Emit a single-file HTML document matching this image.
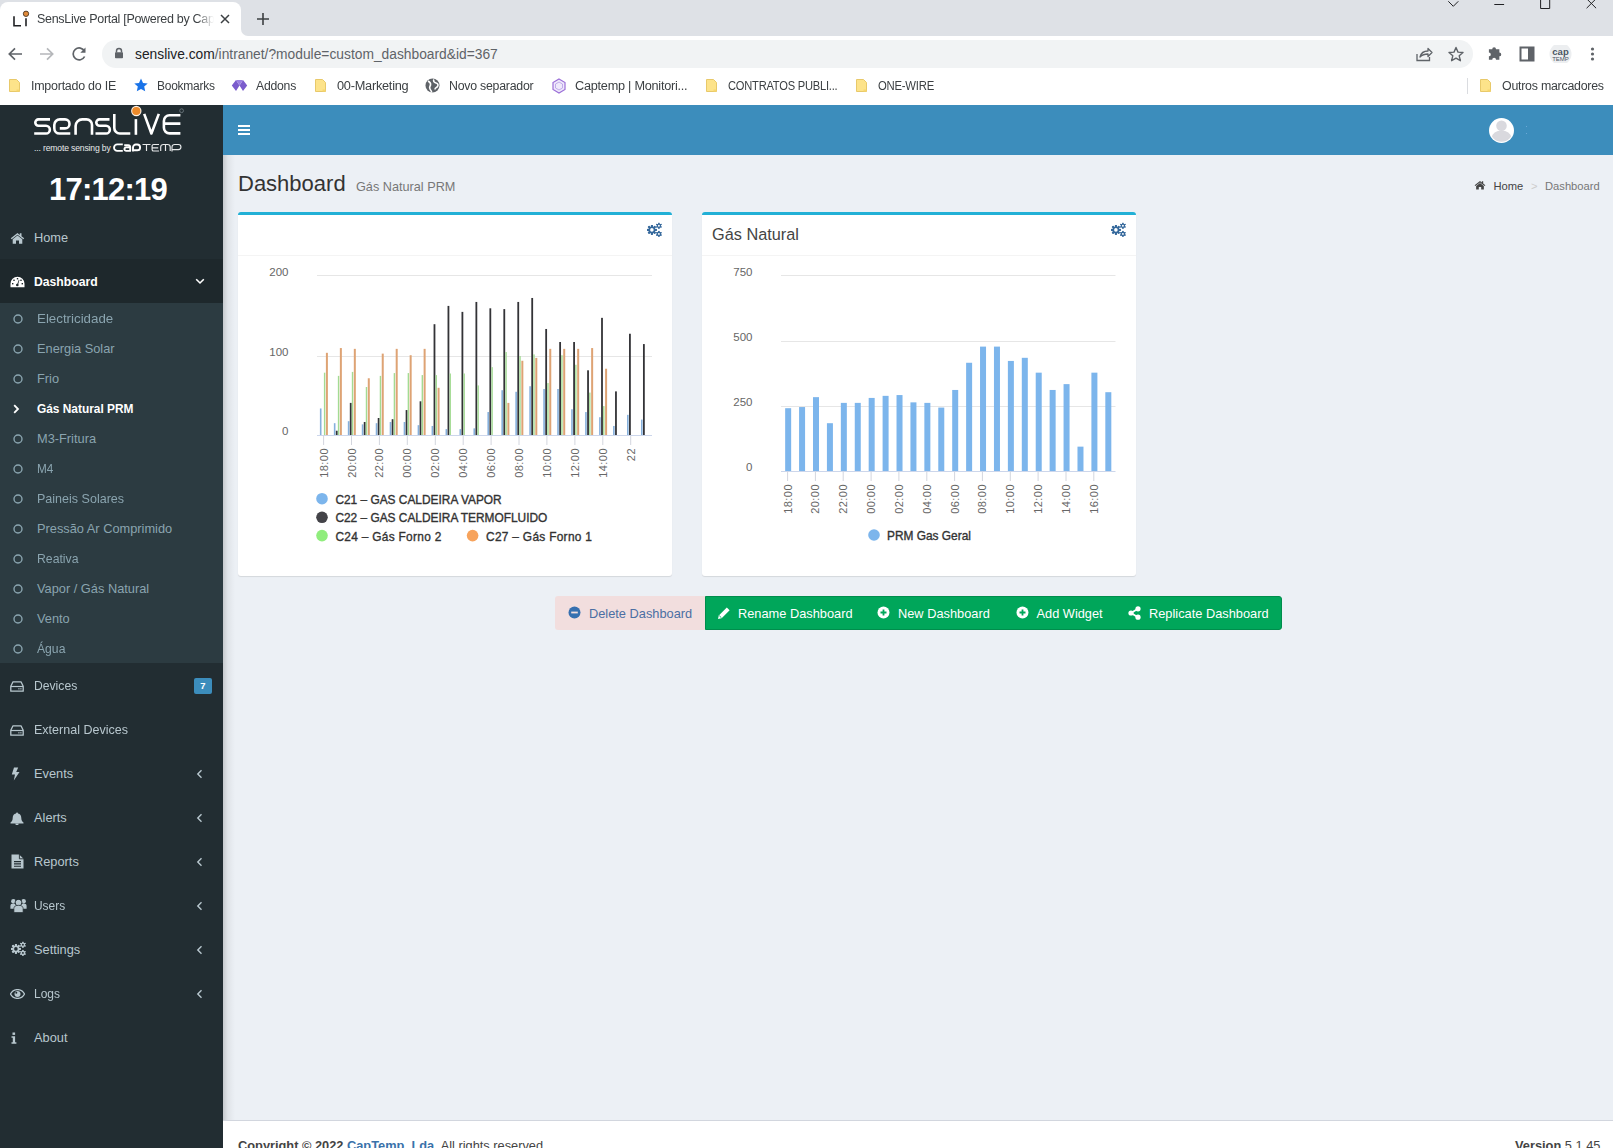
<!DOCTYPE html>
<html><head><meta charset="utf-8"><title>SensLive Portal</title><style>*{margin:0;padding:0;box-sizing:border-box}
html,body{width:1613px;height:1148px;overflow:hidden}
body{position:relative;font-family:"Liberation Sans",sans-serif;background:#ecf0f5}
.a{position:absolute}
.t{white-space:nowrap}
.bm{top:77.5px;font-size:12.5px;line-height:16px;color:#3c4043;letter-spacing:-0.25px}
.sm{font-size:12.8px;line-height:20px}
.bt{top:603.7px;font-size:12.8px;line-height:20px}
</style></head><body>
<div class="a" style="left:0;top:0;width:1613px;height:105px;background:#fff"></div>
<div class="a" style="left:0;top:0;width:241px;height:36px;background:#dee1e6"></div>
<div class="a" style="left:241px;top:0;width:1372px;height:36px;background:#dee1e6;border-bottom-left-radius:7px"></div>
<div class="a" style="left:0;top:2px;width:241px;height:36px;background:#fff;border-radius:8px 8px 0 0"></div>
<svg class="a" style="left:0;top:0" width="36" height="36" viewBox="0 0 36 36"><path d="M14 16.2v9.6h7" fill="none" stroke="#202124" stroke-width="1.6"/><path d="M26 18.3v8" stroke="#202124" stroke-width="1.6"/><circle cx="26" cy="13.8" r="2.7" fill="#e08a3a" stroke="#3a2a1a" stroke-width="0.8"/></svg>
<div class="a t" style="left:37px;top:11.5px;font-size:12.5px;letter-spacing:-0.3px;color:#3c4043;white-space:nowrap;width:180px;overflow:hidden;-webkit-mask-image:linear-gradient(90deg,#000 160px,transparent 177px)">SensLive Portal [Powered by CapTemp]</div>
<svg class="a" style="left:219px;top:13px" width="12" height="12" viewBox="0 0 12 12"><path d="M2 2l8 8M10 2l-8 8" stroke="#3c4043" stroke-width="1.5"/></svg>
<svg class="a" style="left:256px;top:12px" width="14" height="14" viewBox="0 0 14 14"><path d="M7 1v12M1 7h12" stroke="#3c4043" stroke-width="1.6"/></svg>
<svg class="a" style="left:1446px;top:0" width="160" height="12" viewBox="0 0 160 12"><path d="M2.3 1.3l5 5 5-5" fill="none" stroke="#202124" stroke-width="1"/><path d="M48.3 4.5h9.8" stroke="#202124" stroke-width="1"/><path d="M94.6 -1h9.1v9.5h-9.1z" fill="none" stroke="#202124" stroke-width="1"/><path d="M140.6 -1.3l9.5 9.5M150.1 -1.3l-9.5 9.5" stroke="#202124" stroke-width="1"/></svg>
<svg class="a" style="left:6px;top:45px" width="90" height="18" viewBox="0 0 90 18"><path d="M16 9H3.5M9 3.3L3.3 9 9 14.7" fill="none" stroke="#5f6368" stroke-width="1.7"/><path d="M34 9h12.5M41 3.3L46.7 9 41 14.7" fill="none" stroke="#b5b7ba" stroke-width="1.7"/><path d="M78.5 6.2A6 6 0 1 0 78.6 11.5" fill="none" stroke="#5f6368" stroke-width="1.7"/><path d="M79.5 2.6v5.2h-5.2z" fill="#5f6368"/></svg>
<div class="a" style="left:102px;top:40px;width:1371px;height:28px;background:#f1f3f4;border-radius:14px"></div>
<svg class="a" style="left:114px;top:47px" width="10" height="12" viewBox="0 0 10 12"><path d="M2.5 5.5V4a2.5 2.5 0 0 1 5 0v1.5" fill="none" stroke="#5f6368" stroke-width="1.5"/><rect x="1" y="5.3" width="8" height="6" rx="0.8" fill="#5f6368"/></svg>
<div class="a t" style="left:135px;top:47px;font-size:13.8px;color:#202124;white-space:nowrap">senslive.com<span style="color:#5f6368">/intranet/?module=custom_dashboard&amp;id=367</span></div>
<svg class="a" style="left:1415px;top:46px" width="50" height="16" viewBox="0 0 50 16"><path d="M2 8v6.5h12.5V11" fill="none" stroke="#5f6368" stroke-width="1.3"/><path d="M5 11c1-4 4-6 8-6V2.5l4 4-4 4V8c-3 0-6 1-8 3z" fill="none" stroke="#5f6368" stroke-width="1.3" stroke-linejoin="round"/><path d="M41 1.5l2 4.6 5 .4-3.8 3.3 1.2 4.9L41 12.1l-4.4 2.6 1.2-4.9L34 6.5l5-.4z" fill="none" stroke="#5f6368" stroke-width="1.4" stroke-linejoin="round"/></svg>
<svg class="a" style="left:1487px;top:45px" width="112" height="18" viewBox="0 0 112 18"><path d="M2 6h3.5a2 2 0 1 1 4 0H13v3.5a2 2 0 1 1 0 4V17H9.5a2 2 0 1 0-4 0H2v-3.5a2 2 0 1 0 0-4z" fill="#5f6368" transform="translate(0,-1.5) scale(0.95)"/><path d="M33.5 2.5h13v13h-13z" fill="none" stroke="#5f6368" stroke-width="2"/><path d="M41 2.5h5.5v13H41z" fill="#5f6368"/><circle cx="73.5" cy="9" r="11" fill="#eceef0"/><text x="73.5" y="9.5" font-family="Liberation Sans" font-size="9.5" font-weight="bold" fill="#4a5563" text-anchor="middle">cap</text><text x="73.5" y="15.5" font-family="Liberation Sans" font-size="6" fill="#4a5563" text-anchor="middle">TEMP</text><circle cx="105.5" cy="4" r="1.6" fill="#5f6368"/><circle cx="105.5" cy="9" r="1.6" fill="#5f6368"/><circle cx="105.5" cy="14" r="1.6" fill="#5f6368"/></svg>
<svg class="a" style="left:8px;top:78px" width="13" height="15" viewBox="0 0 13 15"><path d="M1.5 1.5h7l3 3v9h-10z" fill="#fde38a" stroke="#e8c96a" stroke-width="1"/><path d="M8.5 11.5h3v2h-3z" fill="#f7d66f"/></svg>
<div class="a t bm" style="left:31px;transform:scaleX(0.9977);transform-origin:0 0">Importado do IE</div>
<svg class="a" style="left:134px;top:78px" width="14" height="14" viewBox="0 0 14 14"><path d="M7 .5l2 4.4 4.7.5-3.5 3.2 1 4.7L7 10.9l-4.2 2.4 1-4.7L.3 5.4 5 4.9z" fill="#1a73e8"/></svg>
<div class="a t bm" style="left:157px;transform:scaleX(0.9589);transform-origin:0 0">Bookmarks</div>
<svg class="a" style="left:231px;top:79px" width="17" height="13" viewBox="0 0 17 13"><path d="M5 1l3.5 5.5L5 12 .8 6.5zM12 1l4.2 5.5L12 12 8.5 6.5z" fill="#7b5ccc"/><path d="M5 1h7l-3.5 5.5z" fill="#9a7fe0"/></svg>
<div class="a t bm" style="left:256px;transform:scaleX(0.9780);transform-origin:0 0">Addons</div>
<svg class="a" style="left:314px;top:78px" width="13" height="15" viewBox="0 0 13 15"><path d="M1.5 1.5h7l3 3v9h-10z" fill="#fde38a" stroke="#e8c96a" stroke-width="1"/><path d="M8.5 11.5h3v2h-3z" fill="#f7d66f"/></svg>
<div class="a t bm" style="left:337px;transform:scaleX(1.0207);transform-origin:0 0">00-Marketing</div>
<svg class="a" style="left:425px;top:78px" width="15" height="15" viewBox="0 0 15 15"><circle cx="7.5" cy="7.5" r="7" fill="#5f6368"/><path d="M3 3c2 1 3 2 2.5 4S4 9 5 11s2 2.5 1.5 3.5M9 1.5c-1 1.5 0 3 2 3.5s2.5 2 1.5 3.5-2.5 1-2.5 3" fill="none" stroke="#fff" stroke-width="1.6"/></svg>
<div class="a t bm" style="left:449px;transform:scaleX(0.9877);transform-origin:0 0">Novo separador</div>
<svg class="a" style="left:551px;top:78px" width="16" height="16" viewBox="0 0 16 16"><path d="M8 1l6 3.5v7L8 15l-6-3.5v-7z" fill="#efe9fb" stroke="#9b6fd8" stroke-width="1.2"/><path d="M8 4l3.5 2v4L8 12l-3.5-2V6z" fill="none" stroke="#b49be6" stroke-width="0.8"/></svg>
<div class="a t bm" style="left:575px;transform:scaleX(1.0167);transform-origin:0 0">Captemp | Monitori...</div>
<svg class="a" style="left:705px;top:78px" width="13" height="15" viewBox="0 0 13 15"><path d="M1.5 1.5h7l3 3v9h-10z" fill="#fde38a" stroke="#e8c96a" stroke-width="1"/><path d="M8.5 11.5h3v2h-3z" fill="#f7d66f"/></svg>
<div class="a t bm" style="left:728px;transform:scaleX(0.8906);transform-origin:0 0">CONTRATOS PUBLI...</div>
<svg class="a" style="left:855px;top:78px" width="13" height="15" viewBox="0 0 13 15"><path d="M1.5 1.5h7l3 3v9h-10z" fill="#fde38a" stroke="#e8c96a" stroke-width="1"/><path d="M8.5 11.5h3v2h-3z" fill="#f7d66f"/></svg>
<div class="a t bm" style="left:878px;transform:scaleX(0.9048);transform-origin:0 0">ONE-WIRE</div>
<div class="a" style="left:1467px;top:78px;width:1px;height:16px;background:#dadce0"></div>
<svg class="a" style="left:1479px;top:78px" width="13" height="15" viewBox="0 0 13 15"><path d="M1.5 1.5h7l3 3v9h-10z" fill="#fde38a" stroke="#e8c96a" stroke-width="1"/><path d="M8.5 11.5h3v2h-3z" fill="#f7d66f"/></svg>
<div class="a t bm" style="left:1502px;transform:scaleX(0.9909);transform-origin:0 0">Outros marcadores</div>
<div class="a" style="left:223px;top:105px;width:1390px;height:50px;background:#3c8dbc"></div>
<svg class="a" style="left:238px;top:124px" width="12" height="12" viewBox="0 0 12 12"><path d="M0 2h12M0 6h12M0 10h12" stroke="#fff" stroke-width="2"/></svg>
<svg class="a" style="left:1489px;top:117.5px" width="25" height="25" viewBox="0 0 25 25"><defs><clipPath id="avc"><circle cx="12.5" cy="12.5" r="11.3"/></clipPath></defs><circle cx="12.5" cy="12.5" r="12.5" fill="#fff"/><g clip-path="url(#avc)" fill="#d9d9de"><circle cx="12.5" cy="7.8" r="5.3"/><ellipse cx="12.5" cy="19.5" rx="9.6" ry="7"/></g></svg>
<div class="a" style="left:1525.5px;top:126px;width:1.2px;height:1.2px;background:#6aa8d6"></div><div class="a" style="left:1525.5px;top:133px;width:1.2px;height:1.2px;background:#6aa8d6"></div>
<div class="a" style="left:223px;top:155px;width:12px;height:993px;background:linear-gradient(90deg,rgba(0,0,0,0.16),rgba(0,0,0,0.05) 40%,rgba(0,0,0,0))"></div>
<div class="a t" style="left:238px;top:171px;font-size:22px;line-height:26px;color:#333">Dashboard</div>
<div class="a t" style="left:356px;top:178.5px;font-size:12.7px;line-height:16px;color:#777">Gás Natural PRM</div>
<svg class="a" style="left:1474px;top:180px" width="12" height="10" viewBox="0 0 15 12"><path d="M7.5 1L.8 6.3l.9 1L7.5 2.8l5.8 4.5.9-1L11.5 4.2V1.3H9.8v1.6z" fill="#444"/><path d="M2.7 7.2L7.5 3.5l4.8 3.7V11.7H9V8.5H6v3.2H2.7z" fill="#444"/></svg>
<div class="a t" style="left:1493.5px;top:178px;font-size:11.2px;line-height:16px;color:#444">Home</div>
<div class="a t" style="left:1531px;top:178px;font-size:11.2px;line-height:16px;color:#ccc">&gt;</div>
<div class="a t" style="left:1545px;top:178px;font-size:11.2px;line-height:16px;color:#777">Dashboard</div>
<div class="a" style="left:238px;top:212px;width:434px;height:364px;background:#fff;border-top:3px solid #22b0d6;border-radius:3px;box-shadow:0 1px 1px rgba(0,0,0,0.1)"></div>
<div class="a" style="left:238px;top:255px;width:434px;height:1px;background:#f4f4f4"></div>
<div class="a" style="left:645px;top:221px;line-height:0"><svg width="18.0" height="18.0" viewBox="0 0 18 18"><circle cx="6.9" cy="8.9" r="3.5" fill="#36699c"/><rect x="5.95" y="4.00" width="1.9" height="9.80" fill="#36699c" transform="rotate(0.0 6.9 8.9)"/><rect x="5.95" y="4.00" width="1.9" height="9.80" fill="#36699c" transform="rotate(45.0 6.9 8.9)"/><rect x="5.95" y="4.00" width="1.9" height="9.80" fill="#36699c" transform="rotate(90.0 6.9 8.9)"/><rect x="5.95" y="4.00" width="1.9" height="9.80" fill="#36699c" transform="rotate(135.0 6.9 8.9)"/><rect x="5.95" y="4.00" width="1.9" height="9.80" fill="#36699c" transform="rotate(180.0 6.9 8.9)"/><rect x="5.95" y="4.00" width="1.9" height="9.80" fill="#36699c" transform="rotate(225.0 6.9 8.9)"/><rect x="5.95" y="4.00" width="1.9" height="9.80" fill="#36699c" transform="rotate(270.0 6.9 8.9)"/><rect x="5.95" y="4.00" width="1.9" height="9.80" fill="#36699c" transform="rotate(315.0 6.9 8.9)"/><circle cx="6.9" cy="8.9" r="1.8" fill="#fff"/><circle cx="13.9" cy="4.8" r="2.1" fill="#36699c"/><rect x="13.30" y="1.85" width="1.2" height="5.90" fill="#36699c" transform="rotate(0.0 13.9 4.8)"/><rect x="13.30" y="1.85" width="1.2" height="5.90" fill="#36699c" transform="rotate(60.0 13.9 4.8)"/><rect x="13.30" y="1.85" width="1.2" height="5.90" fill="#36699c" transform="rotate(120.0 13.9 4.8)"/><rect x="13.30" y="1.85" width="1.2" height="5.90" fill="#36699c" transform="rotate(180.0 13.9 4.8)"/><rect x="13.30" y="1.85" width="1.2" height="5.90" fill="#36699c" transform="rotate(240.0 13.9 4.8)"/><rect x="13.30" y="1.85" width="1.2" height="5.90" fill="#36699c" transform="rotate(300.0 13.9 4.8)"/><circle cx="13.9" cy="4.8" r="0.95" fill="#fff"/><circle cx="13.9" cy="12.9" r="2.1" fill="#36699c"/><rect x="13.30" y="9.95" width="1.2" height="5.90" fill="#36699c" transform="rotate(0.0 13.9 12.9)"/><rect x="13.30" y="9.95" width="1.2" height="5.90" fill="#36699c" transform="rotate(60.0 13.9 12.9)"/><rect x="13.30" y="9.95" width="1.2" height="5.90" fill="#36699c" transform="rotate(120.0 13.9 12.9)"/><rect x="13.30" y="9.95" width="1.2" height="5.90" fill="#36699c" transform="rotate(180.0 13.9 12.9)"/><rect x="13.30" y="9.95" width="1.2" height="5.90" fill="#36699c" transform="rotate(240.0 13.9 12.9)"/><rect x="13.30" y="9.95" width="1.2" height="5.90" fill="#36699c" transform="rotate(300.0 13.9 12.9)"/><circle cx="13.9" cy="12.9" r="0.95" fill="#fff"/></svg></div>
<div class="a" style="left:702px;top:212px;width:434px;height:364px;background:#fff;border-top:3px solid #22b0d6;border-radius:3px;box-shadow:0 1px 1px rgba(0,0,0,0.1)"></div>
<div class="a" style="left:702px;top:255px;width:434px;height:1px;background:#f4f4f4"></div>
<div class="a" style="left:1109px;top:221px;line-height:0"><svg width="18.0" height="18.0" viewBox="0 0 18 18"><circle cx="6.9" cy="8.9" r="3.5" fill="#36699c"/><rect x="5.95" y="4.00" width="1.9" height="9.80" fill="#36699c" transform="rotate(0.0 6.9 8.9)"/><rect x="5.95" y="4.00" width="1.9" height="9.80" fill="#36699c" transform="rotate(45.0 6.9 8.9)"/><rect x="5.95" y="4.00" width="1.9" height="9.80" fill="#36699c" transform="rotate(90.0 6.9 8.9)"/><rect x="5.95" y="4.00" width="1.9" height="9.80" fill="#36699c" transform="rotate(135.0 6.9 8.9)"/><rect x="5.95" y="4.00" width="1.9" height="9.80" fill="#36699c" transform="rotate(180.0 6.9 8.9)"/><rect x="5.95" y="4.00" width="1.9" height="9.80" fill="#36699c" transform="rotate(225.0 6.9 8.9)"/><rect x="5.95" y="4.00" width="1.9" height="9.80" fill="#36699c" transform="rotate(270.0 6.9 8.9)"/><rect x="5.95" y="4.00" width="1.9" height="9.80" fill="#36699c" transform="rotate(315.0 6.9 8.9)"/><circle cx="6.9" cy="8.9" r="1.8" fill="#fff"/><circle cx="13.9" cy="4.8" r="2.1" fill="#36699c"/><rect x="13.30" y="1.85" width="1.2" height="5.90" fill="#36699c" transform="rotate(0.0 13.9 4.8)"/><rect x="13.30" y="1.85" width="1.2" height="5.90" fill="#36699c" transform="rotate(60.0 13.9 4.8)"/><rect x="13.30" y="1.85" width="1.2" height="5.90" fill="#36699c" transform="rotate(120.0 13.9 4.8)"/><rect x="13.30" y="1.85" width="1.2" height="5.90" fill="#36699c" transform="rotate(180.0 13.9 4.8)"/><rect x="13.30" y="1.85" width="1.2" height="5.90" fill="#36699c" transform="rotate(240.0 13.9 4.8)"/><rect x="13.30" y="1.85" width="1.2" height="5.90" fill="#36699c" transform="rotate(300.0 13.9 4.8)"/><circle cx="13.9" cy="4.8" r="0.95" fill="#fff"/><circle cx="13.9" cy="12.9" r="2.1" fill="#36699c"/><rect x="13.30" y="9.95" width="1.2" height="5.90" fill="#36699c" transform="rotate(0.0 13.9 12.9)"/><rect x="13.30" y="9.95" width="1.2" height="5.90" fill="#36699c" transform="rotate(60.0 13.9 12.9)"/><rect x="13.30" y="9.95" width="1.2" height="5.90" fill="#36699c" transform="rotate(120.0 13.9 12.9)"/><rect x="13.30" y="9.95" width="1.2" height="5.90" fill="#36699c" transform="rotate(180.0 13.9 12.9)"/><rect x="13.30" y="9.95" width="1.2" height="5.90" fill="#36699c" transform="rotate(240.0 13.9 12.9)"/><rect x="13.30" y="9.95" width="1.2" height="5.90" fill="#36699c" transform="rotate(300.0 13.9 12.9)"/><circle cx="13.9" cy="12.9" r="0.95" fill="#fff"/></svg></div>
<div class="a t" style="left:712px;top:224px;font-size:16.3px;line-height:20px;color:#444">Gás Natural</div>
<svg class="a" style="left:238px;top:256px" width="434" height="320" viewBox="238 256 434 320" font-family="Liberation Sans">
<path d="M317 275.5H652" stroke="#e6e6e6" stroke-width="1"/>
<path d="M317 356.5H652" stroke="#e6e6e6" stroke-width="1"/>
<text x="288.5" y="276" font-size="11.5" fill="#666" text-anchor="end">200</text>
<text x="288.5" y="356" font-size="11.5" fill="#666" text-anchor="end">100</text>
<text x="288.5" y="435" font-size="11.5" fill="#666" text-anchor="end">0</text>
<rect x="319.90" y="408.47" width="1.6" height="27.03" fill="#86b0dc"/>
<rect x="323.90" y="372.69" width="1.4" height="62.80" fill="#a3db93"/>
<rect x="325.90" y="352.82" width="2.0" height="82.68" fill="#dea374"/>
<rect x="333.86" y="423.18" width="1.6" height="12.32" fill="#86b0dc"/>
<rect x="335.86" y="430.73" width="1.8" height="4.77" fill="#333337"/>
<rect x="337.86" y="375.88" width="1.4" height="59.62" fill="#a3db93"/>
<rect x="339.86" y="348.05" width="2.0" height="87.45" fill="#dea374"/>
<rect x="347.82" y="421.19" width="1.6" height="14.31" fill="#86b0dc"/>
<rect x="349.82" y="402.90" width="1.8" height="32.59" fill="#333337"/>
<rect x="351.82" y="371.90" width="1.4" height="63.60" fill="#a3db93"/>
<rect x="353.82" y="348.85" width="2.0" height="86.66" fill="#dea374"/>
<rect x="361.78" y="424.37" width="1.6" height="11.13" fill="#86b0dc"/>
<rect x="363.78" y="421.99" width="1.8" height="13.52" fill="#333337"/>
<rect x="365.78" y="387.00" width="1.4" height="48.50" fill="#a3db93"/>
<rect x="367.78" y="378.26" width="2.0" height="57.24" fill="#dea374"/>
<rect x="375.74" y="423.18" width="1.6" height="12.32" fill="#86b0dc"/>
<rect x="377.74" y="418.01" width="1.8" height="17.49" fill="#333337"/>
<rect x="379.74" y="375.88" width="1.4" height="59.62" fill="#a3db93"/>
<rect x="381.74" y="353.62" width="2.0" height="81.89" fill="#dea374"/>
<rect x="389.70" y="421.99" width="1.6" height="13.52" fill="#86b0dc"/>
<rect x="391.70" y="419.20" width="1.8" height="16.30" fill="#333337"/>
<rect x="393.70" y="373.09" width="1.4" height="62.41" fill="#a3db93"/>
<rect x="395.70" y="348.85" width="2.0" height="86.66" fill="#dea374"/>
<rect x="403.66" y="421.99" width="1.6" height="13.52" fill="#86b0dc"/>
<rect x="405.66" y="410.06" width="1.8" height="25.44" fill="#333337"/>
<rect x="407.66" y="373.09" width="1.4" height="62.41" fill="#a3db93"/>
<rect x="409.66" y="355.20" width="2.0" height="80.30" fill="#dea374"/>
<rect x="417.62" y="425.17" width="1.6" height="10.34" fill="#86b0dc"/>
<rect x="419.62" y="401.31" width="1.8" height="34.19" fill="#333337"/>
<rect x="421.62" y="375.08" width="1.4" height="60.42" fill="#a3db93"/>
<rect x="423.62" y="348.85" width="2.0" height="86.66" fill="#dea374"/>
<rect x="431.58" y="425.96" width="1.6" height="9.54" fill="#86b0dc"/>
<rect x="433.58" y="324.20" width="1.8" height="111.30" fill="#333337"/>
<rect x="435.58" y="375.08" width="1.4" height="60.42" fill="#a3db93"/>
<rect x="437.58" y="387.80" width="2.0" height="47.70" fill="#dea374"/>
<rect x="445.54" y="429.14" width="1.6" height="6.36" fill="#86b0dc"/>
<rect x="447.54" y="305.91" width="1.8" height="129.59" fill="#333337"/>
<rect x="449.54" y="373.49" width="1.4" height="62.01" fill="#a3db93"/>
<rect x="459.50" y="429.14" width="1.6" height="6.36" fill="#86b0dc"/>
<rect x="461.50" y="311.88" width="1.8" height="123.62" fill="#333337"/>
<rect x="463.50" y="373.49" width="1.4" height="62.01" fill="#a3db93"/>
<rect x="473.46" y="428.35" width="1.6" height="7.16" fill="#86b0dc"/>
<rect x="475.46" y="301.94" width="1.8" height="133.56" fill="#333337"/>
<rect x="477.46" y="385.42" width="1.4" height="50.09" fill="#a3db93"/>
<rect x="487.42" y="412.05" width="1.6" height="23.45" fill="#86b0dc"/>
<rect x="489.42" y="308.30" width="1.8" height="127.20" fill="#333337"/>
<rect x="491.42" y="367.13" width="1.4" height="68.37" fill="#a3db93"/>
<rect x="501.38" y="390.19" width="1.6" height="45.32" fill="#86b0dc"/>
<rect x="503.38" y="309.10" width="1.8" height="126.41" fill="#333337"/>
<rect x="505.38" y="352.02" width="1.4" height="83.48" fill="#a3db93"/>
<rect x="507.38" y="402.90" width="2.0" height="32.59" fill="#dea374"/>
<rect x="515.34" y="391.77" width="1.6" height="43.73" fill="#86b0dc"/>
<rect x="517.34" y="301.94" width="1.8" height="133.56" fill="#333337"/>
<rect x="519.34" y="356.00" width="1.4" height="79.50" fill="#a3db93"/>
<rect x="521.34" y="360.77" width="2.0" height="74.73" fill="#dea374"/>
<rect x="529.30" y="386.21" width="1.6" height="49.29" fill="#86b0dc"/>
<rect x="531.30" y="297.97" width="1.8" height="137.53" fill="#333337"/>
<rect x="533.30" y="354.41" width="1.4" height="81.09" fill="#a3db93"/>
<rect x="535.30" y="357.91" width="2.0" height="77.59" fill="#dea374"/>
<rect x="543.26" y="388.99" width="1.6" height="46.51" fill="#86b0dc"/>
<rect x="545.26" y="328.97" width="1.8" height="106.53" fill="#333337"/>
<rect x="547.26" y="383.03" width="1.4" height="52.47" fill="#a3db93"/>
<rect x="549.26" y="348.85" width="2.0" height="86.66" fill="#dea374"/>
<rect x="557.22" y="388.99" width="1.6" height="46.51" fill="#86b0dc"/>
<rect x="559.22" y="342.01" width="1.8" height="93.49" fill="#333337"/>
<rect x="561.22" y="355.20" width="1.4" height="80.30" fill="#a3db93"/>
<rect x="563.22" y="348.85" width="2.0" height="86.66" fill="#dea374"/>
<rect x="571.18" y="409.26" width="1.6" height="26.24" fill="#86b0dc"/>
<rect x="573.18" y="342.01" width="1.8" height="93.49" fill="#333337"/>
<rect x="575.18" y="364.75" width="1.4" height="70.76" fill="#a3db93"/>
<rect x="577.18" y="348.85" width="2.0" height="86.66" fill="#dea374"/>
<rect x="585.14" y="412.05" width="1.6" height="23.45" fill="#86b0dc"/>
<rect x="587.14" y="370.31" width="1.8" height="65.19" fill="#333337"/>
<rect x="589.14" y="392.57" width="1.4" height="42.93" fill="#a3db93"/>
<rect x="591.14" y="348.05" width="2.0" height="87.45" fill="#dea374"/>
<rect x="599.10" y="417.21" width="1.6" height="18.29" fill="#86b0dc"/>
<rect x="601.10" y="317.84" width="1.8" height="117.66" fill="#333337"/>
<rect x="603.10" y="406.08" width="1.4" height="29.42" fill="#a3db93"/>
<rect x="605.10" y="368.72" width="2.0" height="66.78" fill="#dea374"/>
<rect x="613.06" y="425.96" width="1.6" height="9.54" fill="#86b0dc"/>
<rect x="615.06" y="391.38" width="1.8" height="44.12" fill="#333337"/>
<rect x="627.02" y="414.83" width="1.6" height="20.67" fill="#86b0dc"/>
<rect x="629.02" y="333.74" width="1.8" height="101.76" fill="#333337"/>
<rect x="640.98" y="419.60" width="1.6" height="15.90" fill="#86b0dc"/>
<rect x="642.98" y="344.07" width="1.8" height="91.43" fill="#333337"/>
<path d="M317 435.5H652" stroke="#ccd6eb" stroke-width="1"/>
<path d="M323.6 435.5V445" stroke="#d3d6de" stroke-width="1"/>
<text transform="translate(327.6 448) rotate(-90)" font-size="11" letter-spacing="0.45" fill="#666" text-anchor="end">18:00</text>
<path d="M351.5 435.5V445" stroke="#d3d6de" stroke-width="1"/>
<text transform="translate(355.5 448) rotate(-90)" font-size="11" letter-spacing="0.45" fill="#666" text-anchor="end">20:00</text>
<path d="M379.4 435.5V445" stroke="#d3d6de" stroke-width="1"/>
<text transform="translate(383.4 448) rotate(-90)" font-size="11" letter-spacing="0.45" fill="#666" text-anchor="end">22:00</text>
<path d="M407.3 435.5V445" stroke="#d3d6de" stroke-width="1"/>
<text transform="translate(411.3 448) rotate(-90)" font-size="11" letter-spacing="0.45" fill="#666" text-anchor="end">00:00</text>
<path d="M435.3 435.5V445" stroke="#d3d6de" stroke-width="1"/>
<text transform="translate(439.3 448) rotate(-90)" font-size="11" letter-spacing="0.45" fill="#666" text-anchor="end">02:00</text>
<path d="M463.2 435.5V445" stroke="#d3d6de" stroke-width="1"/>
<text transform="translate(467.2 448) rotate(-90)" font-size="11" letter-spacing="0.45" fill="#666" text-anchor="end">04:00</text>
<path d="M491.1 435.5V445" stroke="#d3d6de" stroke-width="1"/>
<text transform="translate(495.1 448) rotate(-90)" font-size="11" letter-spacing="0.45" fill="#666" text-anchor="end">06:00</text>
<path d="M519.0 435.5V445" stroke="#d3d6de" stroke-width="1"/>
<text transform="translate(523.0 448) rotate(-90)" font-size="11" letter-spacing="0.45" fill="#666" text-anchor="end">08:00</text>
<path d="M546.9 435.5V445" stroke="#d3d6de" stroke-width="1"/>
<text transform="translate(550.9 448) rotate(-90)" font-size="11" letter-spacing="0.45" fill="#666" text-anchor="end">10:00</text>
<path d="M574.9 435.5V445" stroke="#d3d6de" stroke-width="1"/>
<text transform="translate(578.9 448) rotate(-90)" font-size="11" letter-spacing="0.45" fill="#666" text-anchor="end">12:00</text>
<path d="M602.8 435.5V445" stroke="#d3d6de" stroke-width="1"/>
<text transform="translate(606.8 448) rotate(-90)" font-size="11" letter-spacing="0.45" fill="#666" text-anchor="end">14:00</text>
<path d="M630.7 435.5V445" stroke="#d3d6de" stroke-width="1"/>
<text transform="translate(634.7 448) rotate(-90)" font-size="11" letter-spacing="0.45" fill="#666" text-anchor="end">22</text>
<circle cx="322" cy="498.7" r="5.8" fill="#7cb5ec"/>
<text x="335.4" y="503.7" font-size="11.9" letter-spacing="0" fill="#333" stroke="#333" stroke-width="0.35">C21 – GAS CALDEIRA VAPOR</text>
<circle cx="322" cy="517.3" r="5.8" fill="#434348"/>
<text x="335.4" y="522.3" font-size="11.9" letter-spacing="0" fill="#333" stroke="#333" stroke-width="0.35">C22 – GAS CALDEIRA TERMOFLUIDO</text>
<circle cx="322" cy="535.6" r="5.8" fill="#90ed7d"/>
<text x="335.4" y="540.6" font-size="11.9" letter-spacing="0.3" fill="#333" stroke="#333" stroke-width="0.35">C24 – Gás Forno 2</text>
<circle cx="472.6" cy="535.6" r="5.8" fill="#f7a35c"/>
<text x="486.0" y="540.6" font-size="11.9" letter-spacing="0.3" fill="#333" stroke="#333" stroke-width="0.35">C27 – Gás Forno 1</text>
</svg>
<svg class="a" style="left:702px;top:256px" width="434" height="320" viewBox="702 256 434 320" font-family="Liberation Sans">
<path d="M781 275.5H1115.5" stroke="#e6e6e6" stroke-width="1"/>
<path d="M781 341.5H1115.5" stroke="#e6e6e6" stroke-width="1"/>
<path d="M781 406.5H1115.5" stroke="#e6e6e6" stroke-width="1"/>
<text x="752.5" y="276" font-size="11.5" fill="#666" text-anchor="end">750</text>
<text x="752.5" y="341" font-size="11.5" fill="#666" text-anchor="end">500</text>
<text x="752.5" y="406" font-size="11.5" fill="#666" text-anchor="end">250</text>
<text x="752.5" y="471" font-size="11.5" fill="#666" text-anchor="end">0</text>
<rect x="785.16" y="408.19" width="6" height="62.81" fill="#7cb5ec"/>
<rect x="799.08" y="407.05" width="6" height="63.95" fill="#7cb5ec"/>
<rect x="813.00" y="397.15" width="6" height="73.85" fill="#7cb5ec"/>
<rect x="826.92" y="423.20" width="6" height="47.80" fill="#7cb5ec"/>
<rect x="840.84" y="402.88" width="6" height="68.12" fill="#7cb5ec"/>
<rect x="854.76" y="402.88" width="6" height="68.12" fill="#7cb5ec"/>
<rect x="868.68" y="397.93" width="6" height="73.07" fill="#7cb5ec"/>
<rect x="882.60" y="395.85" width="6" height="75.15" fill="#7cb5ec"/>
<rect x="896.52" y="395.06" width="6" height="75.94" fill="#7cb5ec"/>
<rect x="910.44" y="402.36" width="6" height="68.64" fill="#7cb5ec"/>
<rect x="924.36" y="402.88" width="6" height="68.12" fill="#7cb5ec"/>
<rect x="938.28" y="407.57" width="6" height="63.43" fill="#7cb5ec"/>
<rect x="952.20" y="389.96" width="6" height="81.04" fill="#7cb5ec"/>
<rect x="966.12" y="362.76" width="6" height="108.24" fill="#7cb5ec"/>
<rect x="980.04" y="346.61" width="6" height="124.39" fill="#7cb5ec"/>
<rect x="993.96" y="346.61" width="6" height="124.39" fill="#7cb5ec"/>
<rect x="1007.88" y="360.94" width="6" height="110.06" fill="#7cb5ec"/>
<rect x="1021.80" y="357.81" width="6" height="113.19" fill="#7cb5ec"/>
<rect x="1035.72" y="372.66" width="6" height="98.34" fill="#7cb5ec"/>
<rect x="1049.64" y="389.96" width="6" height="81.04" fill="#7cb5ec"/>
<rect x="1063.56" y="384.12" width="6" height="86.88" fill="#7cb5ec"/>
<rect x="1077.48" y="446.64" width="6" height="24.36" fill="#7cb5ec"/>
<rect x="1091.40" y="372.66" width="6" height="98.34" fill="#7cb5ec"/>
<rect x="1105.32" y="392.20" width="6" height="78.80" fill="#7cb5ec"/>
<path d="M781 471.5H1115.5" stroke="#ccd6eb" stroke-width="1"/>
<path d="M787.6 471.5V481" stroke="#d3d6de" stroke-width="1"/>
<text transform="translate(791.6 484) rotate(-90)" font-size="11" letter-spacing="0.45" fill="#666" text-anchor="end">18:00</text>
<path d="M815.4 471.5V481" stroke="#d3d6de" stroke-width="1"/>
<text transform="translate(819.4 484) rotate(-90)" font-size="11" letter-spacing="0.45" fill="#666" text-anchor="end">20:00</text>
<path d="M843.2 471.5V481" stroke="#d3d6de" stroke-width="1"/>
<text transform="translate(847.2 484) rotate(-90)" font-size="11" letter-spacing="0.45" fill="#666" text-anchor="end">22:00</text>
<path d="M871.1 471.5V481" stroke="#d3d6de" stroke-width="1"/>
<text transform="translate(875.1 484) rotate(-90)" font-size="11" letter-spacing="0.45" fill="#666" text-anchor="end">00:00</text>
<path d="M898.9 471.5V481" stroke="#d3d6de" stroke-width="1"/>
<text transform="translate(902.9 484) rotate(-90)" font-size="11" letter-spacing="0.45" fill="#666" text-anchor="end">02:00</text>
<path d="M926.8 471.5V481" stroke="#d3d6de" stroke-width="1"/>
<text transform="translate(930.8 484) rotate(-90)" font-size="11" letter-spacing="0.45" fill="#666" text-anchor="end">04:00</text>
<path d="M954.6 471.5V481" stroke="#d3d6de" stroke-width="1"/>
<text transform="translate(958.6 484) rotate(-90)" font-size="11" letter-spacing="0.45" fill="#666" text-anchor="end">06:00</text>
<path d="M982.4 471.5V481" stroke="#d3d6de" stroke-width="1"/>
<text transform="translate(986.4 484) rotate(-90)" font-size="11" letter-spacing="0.45" fill="#666" text-anchor="end">08:00</text>
<path d="M1010.3 471.5V481" stroke="#d3d6de" stroke-width="1"/>
<text transform="translate(1014.3 484) rotate(-90)" font-size="11" letter-spacing="0.45" fill="#666" text-anchor="end">10:00</text>
<path d="M1038.1 471.5V481" stroke="#d3d6de" stroke-width="1"/>
<text transform="translate(1042.1 484) rotate(-90)" font-size="11" letter-spacing="0.45" fill="#666" text-anchor="end">12:00</text>
<path d="M1066.0 471.5V481" stroke="#d3d6de" stroke-width="1"/>
<text transform="translate(1070.0 484) rotate(-90)" font-size="11" letter-spacing="0.45" fill="#666" text-anchor="end">14:00</text>
<path d="M1093.8 471.5V481" stroke="#d3d6de" stroke-width="1"/>
<text transform="translate(1097.8 484) rotate(-90)" font-size="11" letter-spacing="0.45" fill="#666" text-anchor="end">16:00</text>
<circle cx="874" cy="535" r="5.8" fill="#7cb5ec"/>
<text x="887" y="540" font-size="11.9" fill="#333" stroke="#333" stroke-width="0.35">PRM Gas Geral</text>
</svg>
<div class="a" style="left:555px;top:596px;width:150px;height:34px;background:#f2dede;border-radius:3px 0 0 3px"></div>
<div class="a" style="left:705px;top:596px;width:577px;height:34px;background:#00a65a;border:1px solid #008d4c;border-radius:0 3px 3px 0"></div>
<svg class="a" style="left:567.5px;top:606.3px" width="13" height="13" viewBox="0 0 13 13"><circle cx="6.5" cy="6.5" r="6" fill="#3670b0"/><rect x="3.2" y="5.6" width="6.6" height="1.8" fill="#f2dede"/></svg>
<div class="a t bt" style="left:589px;color:#4b6fa3">Delete Dashboard</div>
<svg class="a" style="left:717px;top:606px" width="14" height="14" viewBox="0 0 14 14"><path d="M1 13l.8-3.6L9.8 1.4l2.8 2.8-8 8z" fill="#fff"/><path d="M2.2 9.6l2.3 2.3" stroke="#00a65a" stroke-width=".9"/></svg>
<div class="a t bt" style="left:738px;color:#fff">Rename Dashboard</div>
<svg class="a" style="left:877px;top:606.3px" width="13" height="13" viewBox="0 0 13 13"><circle cx="6.5" cy="6.5" r="6" fill="#fff"/><path d="M6.5 3.5v6M3.5 6.5h6" stroke="#00a65a" stroke-width="1.8"/></svg>
<div class="a t bt" style="left:898px;color:#fff">New Dashboard</div>
<svg class="a" style="left:1015.5px;top:606.3px" width="13" height="13" viewBox="0 0 13 13"><circle cx="6.5" cy="6.5" r="6" fill="#fff"/><path d="M6.5 3.5v6M3.5 6.5h6" stroke="#00a65a" stroke-width="1.8"/></svg>
<div class="a t bt" style="left:1036.5px;color:#fff">Add Widget</div>
<svg class="a" style="left:1127.5px;top:606px" width="13" height="14" viewBox="0 0 13 14"><path d="M10 2.8L3 7l7 4.2" stroke="#fff" stroke-width="1.8" fill="none"/><circle cx="10" cy="2.8" r="2.6" fill="#fff"/><circle cx="3" cy="7" r="2.6" fill="#fff"/><circle cx="10" cy="11.2" r="2.6" fill="#fff"/></svg>
<div class="a t bt" style="left:1149px;color:#fff">Replicate Dashboard</div>
<div class="a" style="left:223px;top:1120px;width:1390px;height:28px;background:#fff;border-top:1px solid #d2d6de"></div>
<div class="a t" style="left:238px;top:1135.5px;font-size:12.8px;line-height:20px;color:#444;white-space:nowrap"><b>Copyright © 2022 <span style="color:#3a72aa">CapTemp, Lda.</span></b> All rights reserved.</div>
<div class="a t" style="left:1515px;top:1136px;font-size:12.8px;line-height:20px;color:#444;white-space:nowrap"><b>Version</b> 5.1.45</div>
<div class="a" style="left:0;top:105px;width:223px;height:1043px;background:#222d32"></div>
<svg class="a" style="left:0;top:104px" width="223" height="52" viewBox="0 104 223 52">
<path stroke="#fff" stroke-width="2.6" fill="none" stroke-linecap="butt" stroke-linejoin="round" d="M50 119.4H38.5a3.2 3.2 0 0 0 0 6.4H46a3.85 3.85 0 0 1 0 7.7H34.2"/>
<path stroke="#fff" stroke-width="2.6" fill="none" stroke-linecap="butt" stroke-linejoin="round" d="M70.3 133.5H59.5a5.2 5.2 0 0 1-5.2-5.2V125a5.6 5.6 0 0 1 5.6-5.6H65a4.5 4.5 0 0 1 0 9H59.8"/>
<path stroke="#fff" stroke-width="2.6" fill="none" stroke-linecap="butt" stroke-linejoin="round" d="M75.6 134.8V126a6.6 6.6 0 0 1 6.6-6.6h4.3a5.5 5.5 0 0 1 5.5 5.5v9.9"/>
<path stroke="#fff" stroke-width="2.6" fill="none" stroke-linecap="butt" stroke-linejoin="round" d="M109.5 119.4H99.5a3.2 3.2 0 0 0 0 6.4H106a3.85 3.85 0 0 1 0 7.7H95.5"/>
<path stroke="#fff" stroke-width="2.6" fill="none" stroke-linecap="butt" stroke-linejoin="round" d="M114.3 113.9V128a5.5 5.5 0 0 0 5.5 5.5h10.5"/>
<path stroke="#fff" stroke-width="2.6" fill="none" stroke-linecap="butt" stroke-linejoin="round" d="M135.9 119.1v15.7"/>
<path stroke="#fff" stroke-width="2.6" fill="none" stroke-linecap="butt" stroke-linejoin="round" d="M144.2 113.9L151.4 133.5 158.8 113.9"/>
<path stroke="#fff" stroke-width="2.6" fill="none" stroke-linecap="butt" stroke-linejoin="round" d="M180.4 115.3H169.5a5.6 5.6 0 0 0-5.6 5.6v6.9a5.6 5.6 0 0 0 5.6 5.6h10.9M165 123.6h15.4"/>
<circle cx="136.3" cy="111" r="5.2" fill="#fff3e6"/><circle cx="136.3" cy="111" r="4.1" fill="#ec8a2a"/>
<circle cx="181.6" cy="110.7" r="1.9" fill="none" stroke="#8a969c" stroke-width=".6"/>
</svg>
<div class="a" style="left:34px;top:143px;font-size:8.6px;color:#e6e9ea;white-space:nowrap;letter-spacing:-0.15px">... remote sensing by</div>
<svg class="a" style="left:112px;top:143px" width="72" height="10" viewBox="0 0 72 10"><g fill="none" stroke="#fff" stroke-linejoin="round"><path stroke-width="1.9" d="M10.8 1.4H5.3a3.25 3.25 0 0 0 0 6.5h5.5"/><path stroke-width="1.9" d="M12.2 2.3h4a2 2 0 0 1 2 2V7.9h-4a1.75 1.75 0 0 1 0-3.5h4"/><path stroke-width="1.9" d="M21 8.6V4.4a2.9 2.9 0 0 1 2.9-2.9h1.3a2.9 2.9 0 0 1 0 5.8H21"/></g><g fill="none" stroke="#e8eaeb" stroke-width="1.15" stroke-linejoin="round"><path d="M30.5 1.5h8M34.5 1.5v6.6"/><path d="M47 1.5h-5.3a1.6 1.6 0 0 0-1.6 1.6v3.3a1.6 1.6 0 0 0 1.6 1.6H47M40.2 4.8h6"/><path d="M48.7 8.1V4.1a2.6 2.6 0 0 1 2.6-2.6h4.3a2.6 2.6 0 0 1 2.6 2.6v4M53.5 1.7v6.4"/><path d="M60 8.6V4.1a2.6 2.6 0 0 1 2.6-2.6h3.8a2.55 2.55 0 0 1 0 5.1H60"/></g></svg>
<div class="a" style="left:49px;top:173px;font-size:31px;font-weight:bold;color:#fff;letter-spacing:-0.75px;line-height:34px;white-space:nowrap">17:12:19</div>
<div class="a" style="left:10px;top:232px;line-height:0"><svg width="15" height="12" viewBox="0 0 15 12"><path d="M7.5 1L.8 6.3l.9 1L7.5 2.8l5.8 4.5.9-1L11.5 4.2V1.3H9.8v1.6z" fill="#b8c7ce"/><path d="M2.7 7.2L7.5 3.5l4.8 3.7V11.7H9V8.5H6v3.2H2.7z" fill="#b8c7ce"/></svg></div>
<div class="a t sm" style="left:34px;top:228px;color:#b8c7ce">Home</div>
<div class="a" style="left:0;top:259px;width:223px;height:44px;background:#1e282c"></div>
<div class="a" style="left:10px;top:276px;line-height:0"><svg width="15" height="12" viewBox="0 0 15 12"><path d="M7.5 .8A7 7 0 0 0 .5 7.8v3.4h14V7.8a7 7 0 0 0-7-7z" fill="#fff"/><g fill="#1e282c"><rect x="6.8" y="2" width="1.4" height="1.4"/><rect x="3.3" y="3.6" width="1.4" height="1.4"/><rect x="10.3" y="3.6" width="1.4" height="1.4"/><rect x="2" y="7" width="1.4" height="1.4"/><rect x="11.6" y="7" width="1.4" height="1.4"/><circle cx="7.3" cy="9" r="1.3"/><path d="M7 8.8l1.8-5 .6.2-1.4 5z"/></g></svg></div>
<div class="a t sm" style="left:34px;top:272px;color:#fff;font-weight:bold;font-size:12.2px">Dashboard</div>
<div class="a" style="left:195px;top:278px;line-height:0"><svg width="10" height="7" viewBox="0 0 10 7"><path d="M1.2 1.3L5 5l3.8-3.7" fill="none" stroke="#fff" stroke-width="1.6"/></svg></div>
<div class="a" style="left:0;top:303px;width:223px;height:360px;background:#2c3b41"></div>
<div class="a" style="left:13px;top:314px;line-height:0"><svg width="10" height="10" viewBox="0 0 10 10"><circle cx="5" cy="5" r="4" fill="none" stroke="#8aa4af" stroke-width="1.4"/></svg></div>
<div class="a t sm" style="left:37px;top:309px;color:#8aa4af;transform:scaleX(1.04);transform-origin:0 0">Electricidade</div>
<div class="a" style="left:13px;top:344px;line-height:0"><svg width="10" height="10" viewBox="0 0 10 10"><circle cx="5" cy="5" r="4" fill="none" stroke="#8aa4af" stroke-width="1.4"/></svg></div>
<div class="a t sm" style="left:37px;top:339px;color:#8aa4af">Energia Solar</div>
<div class="a" style="left:13px;top:374px;line-height:0"><svg width="10" height="10" viewBox="0 0 10 10"><circle cx="5" cy="5" r="4" fill="none" stroke="#8aa4af" stroke-width="1.4"/></svg></div>
<div class="a t sm" style="left:37px;top:369px;color:#8aa4af">Frio</div>
<div class="a" style="left:13px;top:404px;line-height:0"><svg width="7" height="10" viewBox="0 0 7 10"><path d="M1.2 1.2L5 5 1.2 8.8" fill="none" stroke="#fff" stroke-width="1.8"/></svg></div>
<div class="a t sm" style="left:37px;top:399px;color:#fff;font-weight:bold;font-size:11.9px">Gás Natural PRM</div>
<div class="a" style="left:13px;top:434px;line-height:0"><svg width="10" height="10" viewBox="0 0 10 10"><circle cx="5" cy="5" r="4" fill="none" stroke="#8aa4af" stroke-width="1.4"/></svg></div>
<div class="a t sm" style="left:37px;top:429px;color:#8aa4af">M3-Fritura</div>
<div class="a" style="left:13px;top:464px;line-height:0"><svg width="10" height="10" viewBox="0 0 10 10"><circle cx="5" cy="5" r="4" fill="none" stroke="#8aa4af" stroke-width="1.4"/></svg></div>
<div class="a t sm" style="left:37px;top:459px;color:#8aa4af;transform:scaleX(0.92);transform-origin:0 0">M4</div>
<div class="a" style="left:13px;top:494px;line-height:0"><svg width="10" height="10" viewBox="0 0 10 10"><circle cx="5" cy="5" r="4" fill="none" stroke="#8aa4af" stroke-width="1.4"/></svg></div>
<div class="a t sm" style="left:37px;top:489px;color:#8aa4af;transform:scaleX(0.979);transform-origin:0 0">Paineis Solares</div>
<div class="a" style="left:13px;top:524px;line-height:0"><svg width="10" height="10" viewBox="0 0 10 10"><circle cx="5" cy="5" r="4" fill="none" stroke="#8aa4af" stroke-width="1.4"/></svg></div>
<div class="a t sm" style="left:37px;top:519px;color:#8aa4af">Pressão Ar Comprimido</div>
<div class="a" style="left:13px;top:554px;line-height:0"><svg width="10" height="10" viewBox="0 0 10 10"><circle cx="5" cy="5" r="4" fill="none" stroke="#8aa4af" stroke-width="1.4"/></svg></div>
<div class="a t sm" style="left:37px;top:549px;color:#8aa4af;transform:scaleX(0.957);transform-origin:0 0">Reativa</div>
<div class="a" style="left:13px;top:584px;line-height:0"><svg width="10" height="10" viewBox="0 0 10 10"><circle cx="5" cy="5" r="4" fill="none" stroke="#8aa4af" stroke-width="1.4"/></svg></div>
<div class="a t sm" style="left:37px;top:579px;color:#8aa4af">Vapor / Gás Natural</div>
<div class="a" style="left:13px;top:614px;line-height:0"><svg width="10" height="10" viewBox="0 0 10 10"><circle cx="5" cy="5" r="4" fill="none" stroke="#8aa4af" stroke-width="1.4"/></svg></div>
<div class="a t sm" style="left:37px;top:609px;color:#8aa4af">Vento</div>
<div class="a" style="left:13px;top:644px;line-height:0"><svg width="10" height="10" viewBox="0 0 10 10"><circle cx="5" cy="5" r="4" fill="none" stroke="#8aa4af" stroke-width="1.4"/></svg></div>
<div class="a t sm" style="left:37px;top:639px;color:#8aa4af;transform:scaleX(0.95);transform-origin:0 0">Água</div>
<div class="a" style="left:10px;top:681px;line-height:0"><svg width="14" height="11" viewBox="0 0 14 11"><path d="M3 .8h8l2.2 4.5v4.9H.8V5.3z" fill="none" stroke="#b8c7ce" stroke-width="1.3" stroke-linejoin="round"/><path d="M1 5.5h12" stroke="#b8c7ce" stroke-width="1.2"/><rect x="8.3" y="7.2" width="1.2" height="1.2" fill="#b8c7ce"/><rect x="10.3" y="7.2" width="1.2" height="1.2" fill="#b8c7ce"/></svg></div>
<div class="a t sm" style="left:34px;top:676px;color:#b8c7ce;transform:scaleX(0.95);transform-origin:0 0">Devices</div>
<div class="a" style="left:194px;top:678px;width:18px;height:16px;background:#3c8dbc;border-radius:2px;color:#fff;font-size:9.5px;font-weight:bold;text-align:center;line-height:16px">7</div>
<div class="a" style="left:10px;top:725px;line-height:0"><svg width="14" height="11" viewBox="0 0 14 11"><path d="M3 .8h8l2.2 4.5v4.9H.8V5.3z" fill="none" stroke="#b8c7ce" stroke-width="1.3" stroke-linejoin="round"/><path d="M1 5.5h12" stroke="#b8c7ce" stroke-width="1.2"/><rect x="8.3" y="7.2" width="1.2" height="1.2" fill="#b8c7ce"/><rect x="10.3" y="7.2" width="1.2" height="1.2" fill="#b8c7ce"/></svg></div>
<div class="a t sm" style="left:34px;top:720px;color:#b8c7ce;transform:scaleX(0.978);transform-origin:0 0">External Devices</div>
<div class="a" style="left:11px;top:767px;line-height:0"><svg width="9" height="14" viewBox="0 0 9 14"><path d="M3 .5h4.2L5.2 5H8.5L2.8 13.5 4 7.5H.8z" fill="#b8c7ce"/></svg></div>
<div class="a t sm" style="left:34px;top:764px;color:#b8c7ce">Events</div>
<div class="a" style="left:196px;top:769px;line-height:0"><svg width="7" height="10" viewBox="0 0 7 10"><path d="M5.5 1.3L1.8 5l3.7 3.7" fill="none" stroke="#b8c7ce" stroke-width="1.4"/></svg></div>
<div class="a" style="left:10px;top:812px;line-height:0"><svg width="14" height="13" viewBox="0 0 14 13"><path d="M7 .5c.6 0 1 .4 1 .9 2.3.4 3.3 2.3 3.3 4.6 0 2.3.9 3.6 2.2 4.6v.9H.5v-.9c1.3-1 2.2-2.3 2.2-4.6 0-2.3 1-4.2 3.3-4.6 0-.5.4-.9 1-.9z" fill="#b8c7ce"/><path d="M5.3 11.6a1.7 1.7 0 0 0 3.4 0z" fill="#b8c7ce"/></svg></div>
<div class="a t sm" style="left:34px;top:808px;color:#b8c7ce">Alerts</div>
<div class="a" style="left:196px;top:813px;line-height:0"><svg width="7" height="10" viewBox="0 0 7 10"><path d="M5.5 1.3L1.8 5l3.7 3.7" fill="none" stroke="#b8c7ce" stroke-width="1.4"/></svg></div>
<div class="a" style="left:11px;top:854px;line-height:0"><svg width="13" height="15" viewBox="0 0 13 15"><path d="M.5.5H8.2l4.3 4.3V14.5H.5z" fill="#b8c7ce"/><path d="M8.4.2v4.6H13" fill="none" stroke="#222d32" stroke-width=".9"/><path d="M3 7.6h7M3 9.9h7M3 12.2h7" stroke="#222d32" stroke-width="1.1"/></svg></div>
<div class="a t sm" style="left:34px;top:852px;color:#b8c7ce">Reports</div>
<div class="a" style="left:196px;top:857px;line-height:0"><svg width="7" height="10" viewBox="0 0 7 10"><path d="M5.5 1.3L1.8 5l3.7 3.7" fill="none" stroke="#b8c7ce" stroke-width="1.4"/></svg></div>
<div class="a" style="left:10px;top:897.5px;line-height:0"><svg width="17" height="15" viewBox="0 0 17 15"><circle cx="3.4" cy="3.3" r="2.3" fill="#b8c7ce"/><circle cx="13.6" cy="3.3" r="2.3" fill="#b8c7ce"/><path d="M.4 10.8V8c0-1.6 1.2-2.4 3-2.4s3 .8 3 2.4v2.8zM10.6 10.8V8c0-1.6 1.2-2.4 3-2.4s3 .8 3 2.4v2.8z" fill="#b8c7ce"/><circle cx="8.5" cy="4.6" r="2.9" fill="#b8c7ce"/><circle cx="8.5" cy="4.6" r="3.5" fill="none" stroke="#222d32" stroke-width=".8"/><path d="M3.9 14.5V10.3c0-2 1.8-3 4.6-3s4.6 1 4.6 3v4.2z" fill="#b8c7ce" stroke="#222d32" stroke-width=".7"/></svg></div>
<div class="a t sm" style="left:34px;top:896px;color:#b8c7ce;transform:scaleX(0.932);transform-origin:0 0">Users</div>
<div class="a" style="left:196px;top:901px;line-height:0"><svg width="7" height="10" viewBox="0 0 7 10"><path d="M5.5 1.3L1.8 5l3.7 3.7" fill="none" stroke="#b8c7ce" stroke-width="1.4"/></svg></div>
<div class="a" style="left:9px;top:940px;line-height:0"><svg width="18.0" height="18.0" viewBox="0 0 18 18"><circle cx="6.9" cy="8.9" r="3.5" fill="#b8c7ce"/><rect x="5.95" y="4.00" width="1.9" height="9.80" fill="#b8c7ce" transform="rotate(0.0 6.9 8.9)"/><rect x="5.95" y="4.00" width="1.9" height="9.80" fill="#b8c7ce" transform="rotate(45.0 6.9 8.9)"/><rect x="5.95" y="4.00" width="1.9" height="9.80" fill="#b8c7ce" transform="rotate(90.0 6.9 8.9)"/><rect x="5.95" y="4.00" width="1.9" height="9.80" fill="#b8c7ce" transform="rotate(135.0 6.9 8.9)"/><rect x="5.95" y="4.00" width="1.9" height="9.80" fill="#b8c7ce" transform="rotate(180.0 6.9 8.9)"/><rect x="5.95" y="4.00" width="1.9" height="9.80" fill="#b8c7ce" transform="rotate(225.0 6.9 8.9)"/><rect x="5.95" y="4.00" width="1.9" height="9.80" fill="#b8c7ce" transform="rotate(270.0 6.9 8.9)"/><rect x="5.95" y="4.00" width="1.9" height="9.80" fill="#b8c7ce" transform="rotate(315.0 6.9 8.9)"/><circle cx="6.9" cy="8.9" r="1.8" fill="#222d32"/><circle cx="13.9" cy="4.8" r="2.1" fill="#b8c7ce"/><rect x="13.30" y="1.85" width="1.2" height="5.90" fill="#b8c7ce" transform="rotate(0.0 13.9 4.8)"/><rect x="13.30" y="1.85" width="1.2" height="5.90" fill="#b8c7ce" transform="rotate(60.0 13.9 4.8)"/><rect x="13.30" y="1.85" width="1.2" height="5.90" fill="#b8c7ce" transform="rotate(120.0 13.9 4.8)"/><rect x="13.30" y="1.85" width="1.2" height="5.90" fill="#b8c7ce" transform="rotate(180.0 13.9 4.8)"/><rect x="13.30" y="1.85" width="1.2" height="5.90" fill="#b8c7ce" transform="rotate(240.0 13.9 4.8)"/><rect x="13.30" y="1.85" width="1.2" height="5.90" fill="#b8c7ce" transform="rotate(300.0 13.9 4.8)"/><circle cx="13.9" cy="4.8" r="0.95" fill="#222d32"/><circle cx="13.9" cy="12.9" r="2.1" fill="#b8c7ce"/><rect x="13.30" y="9.95" width="1.2" height="5.90" fill="#b8c7ce" transform="rotate(0.0 13.9 12.9)"/><rect x="13.30" y="9.95" width="1.2" height="5.90" fill="#b8c7ce" transform="rotate(60.0 13.9 12.9)"/><rect x="13.30" y="9.95" width="1.2" height="5.90" fill="#b8c7ce" transform="rotate(120.0 13.9 12.9)"/><rect x="13.30" y="9.95" width="1.2" height="5.90" fill="#b8c7ce" transform="rotate(180.0 13.9 12.9)"/><rect x="13.30" y="9.95" width="1.2" height="5.90" fill="#b8c7ce" transform="rotate(240.0 13.9 12.9)"/><rect x="13.30" y="9.95" width="1.2" height="5.90" fill="#b8c7ce" transform="rotate(300.0 13.9 12.9)"/><circle cx="13.9" cy="12.9" r="0.95" fill="#222d32"/></svg></div>
<div class="a t sm" style="left:34px;top:940px;color:#b8c7ce">Settings</div>
<div class="a" style="left:196px;top:945px;line-height:0"><svg width="7" height="10" viewBox="0 0 7 10"><path d="M5.5 1.3L1.8 5l3.7 3.7" fill="none" stroke="#b8c7ce" stroke-width="1.4"/></svg></div>
<div class="a" style="left:10px;top:989px;line-height:0"><svg width="15" height="10" viewBox="0 0 15 10"><path d="M.5 5C2 2.2 4.5.6 7.5.6S13 2.2 14.5 5C13 7.8 10.5 9.4 7.5 9.4S2 7.8.5 5z" fill="none" stroke="#b8c7ce" stroke-width="1.3"/><circle cx="7.5" cy="5" r="3" fill="#b8c7ce"/><circle cx="6.3" cy="3.8" r="1" fill="#222d32"/></svg></div>
<div class="a t sm" style="left:34px;top:984px;color:#b8c7ce;transform:scaleX(0.936);transform-origin:0 0">Logs</div>
<div class="a" style="left:196px;top:989px;line-height:0"><svg width="7" height="10" viewBox="0 0 7 10"><path d="M5.5 1.3L1.8 5l3.7 3.7" fill="none" stroke="#b8c7ce" stroke-width="1.4"/></svg></div>
<div class="a" style="left:11px;top:1032px;line-height:0"><svg width="6" height="12" viewBox="0 0 6 12"><rect x="1.5" y=".5" width="2.6" height="2.4" fill="#b8c7ce"/><path d="M.5 4.3h3.6v5.9h1.3v1.5H.5v-1.5h1.3V5.8H.5z" fill="#b8c7ce"/></svg></div>
<div class="a t sm" style="left:34px;top:1028px;color:#b8c7ce">About</div>
</body></html>
